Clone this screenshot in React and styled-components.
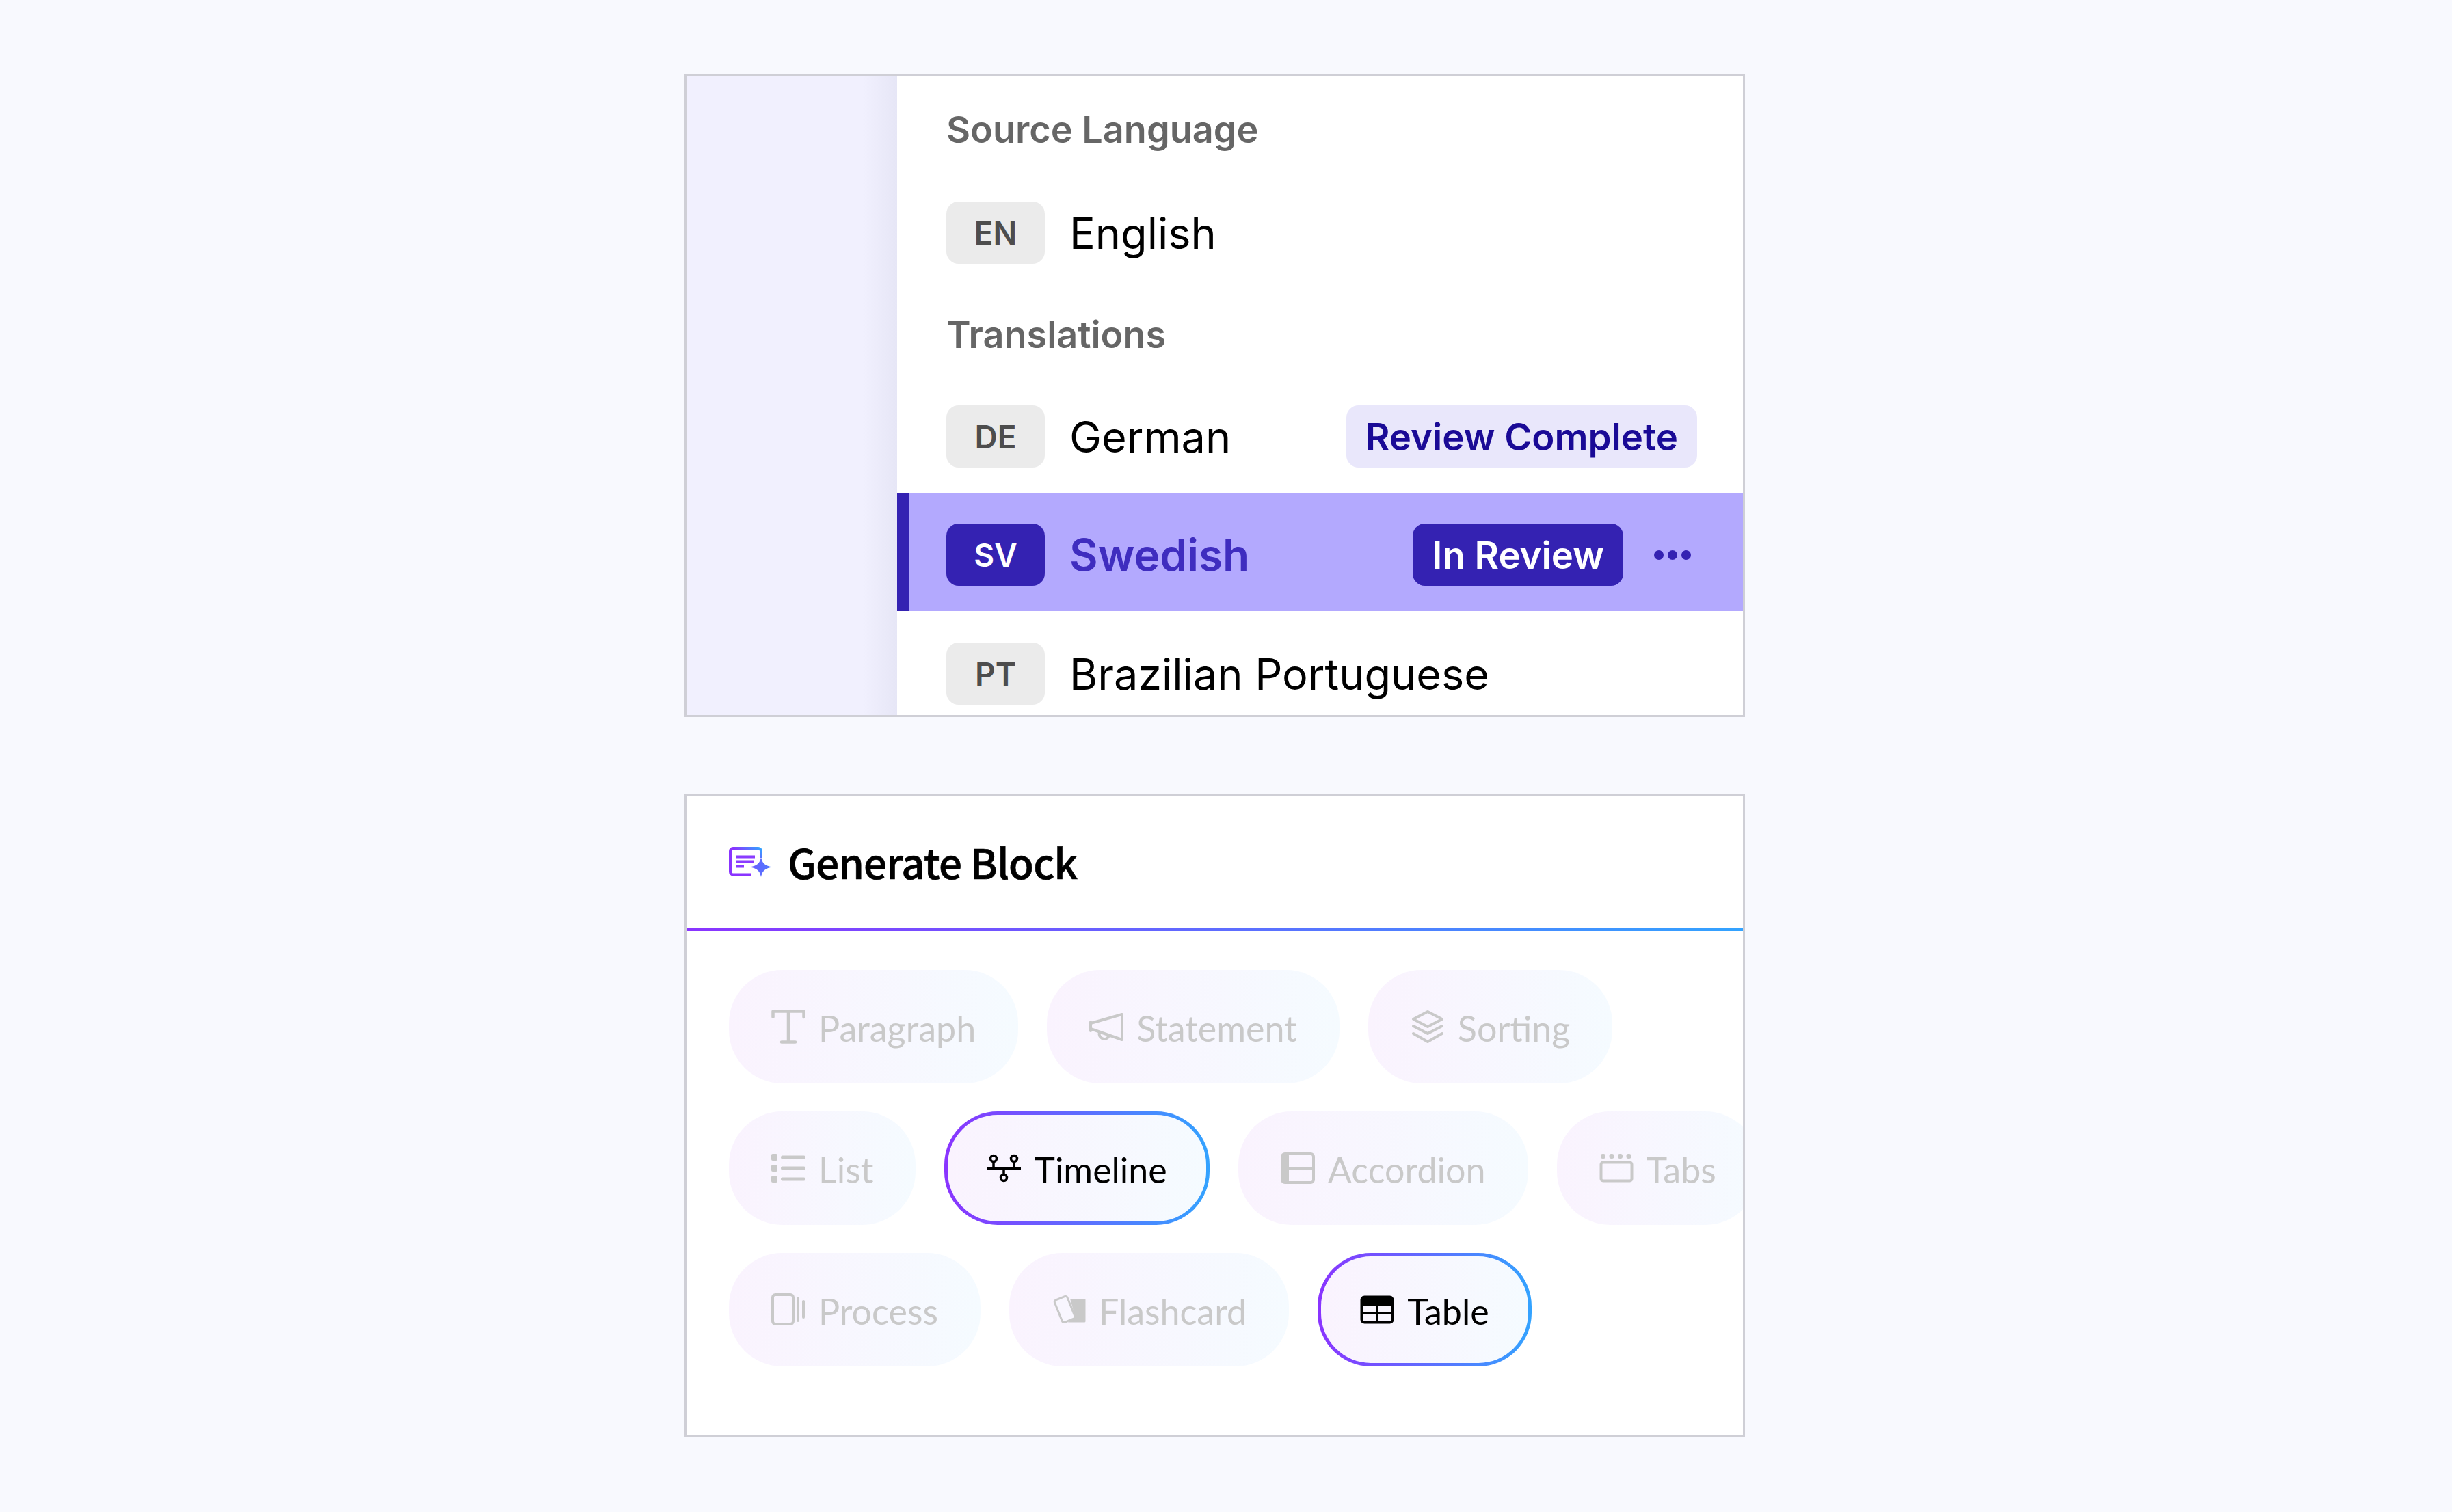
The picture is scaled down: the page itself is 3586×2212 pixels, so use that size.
import styled, { createGlobalStyle } from 'styled-components';

const GlobalStyle = createGlobalStyle`
    html, body {
        margin: 0;
        padding: 0;
        background-color: #f8f9fe;
    }
`;

const Page = styled.div`
    width: 3586px;
    height: 2212px;
    box-sizing: border-box;
    padding: 108px 0 0 1001px;
    display: flex;
    flex-direction: column;
    gap: 112px;
    background-color: #f8f9fe;
`;

const Panel = styled.section`
    width: 1551px;
    height: 941px;
    box-sizing: border-box;
    border: 3px solid #cfcfd6;
    background-color: #fff;
    overflow: hidden;
    display: flex;
    flex-direction: ${({ $column }) => ($column ? 'column' : 'row')};
`;

const Sidebar = styled.div`
    width: 308px;
    flex-shrink: 0;
    background: linear-gradient(90deg, #f1f0fe 0, #f1f0fe 258px, #e6e6f6 100%);
`;

const LanguageList = styled.div`
    flex: 1;
    min-width: 0;
    padding-top: 44px;
    font-family: Inter, "Liberation Sans", sans-serif;
`;

const SectionLabel = styled.div`
    height: 70px;
    line-height: 70px;
    margin: ${({ $top }) => $top || 0}px 0 0 72px;
    font-size: 54px;
    font-weight: 600;
    color: #666;
`;

const Row = styled.div`
    display: flex;
    align-items: center;
    box-sizing: content-box;
    height: 91px;
    margin-top: ${({ $top }) => $top || 0}px;
    padding: ${({ $active }) => ($active ? '45px 76px 37px 54px' : '0 67px 0 72px')};
    background-color: ${({ $active }) => ($active ? '#b3a9fe' : 'transparent')};
    border-left: ${({ $active }) => ($active ? '18px solid #3422b2' : 'none')};
`;

const CodeBadge = styled.span`
    width: 144px;
    height: 91px;
    flex-shrink: 0;
    display: flex;
    align-items: center;
    justify-content: center;
    border-radius: 18px;
    font-size: 46px;
    font-weight: 600;
    background-color: ${({ $active }) => ($active ? '#3422b2' : '#ebebeb')};
    color: ${({ $active }) => ($active ? '#fff' : '#4d4d4d')};
`;

const LanguageName = styled.span`
    margin-left: 36px;
    font-size: ${({ $active }) => ($active ? 64 : 63)}px;
    font-weight: ${({ $active }) => ($active ? 600 : 400)};
    color: ${({ $active }) => ($active ? '#3f2dbf' : '#000')};
`;

const StatusPill = styled.span`
    margin-left: auto;
    height: 91px;
    display: flex;
    align-items: center;
    padding: 0 28px;
    border-radius: 18px;
    font-size: 54.5px;
    font-weight: 600;
    background-color: ${({ $active }) => ($active ? '#3422b2' : '#e9e7fb')};
    color: ${({ $active }) => ($active ? '#fff' : '#1a0a96')};
`;

const MoreDots = styled.span`
    display: flex;
    gap: 6px;
    margin-left: 45px;
`;

const Dot = styled.i`
    width: 14px;
    height: 14px;
    border-radius: 50%;
    background-color: #3422b2;
`;

const BlockHeader = styled.header`
    height: 193px;
    flex-shrink: 0;
    display: flex;
    align-items: center;
    gap: 23px;
    padding-left: 62px;
`;

const BlockTitle = styled.h1`
    margin: 0 0 2px;
    font-family: "Noto Sans CJK SC", "Noto Sans", sans-serif;
    font-size: 60px;
    font-weight: 500;
    letter-spacing: -0.8px;
    -webkit-text-stroke: 0.7px #000;
    color: #000;
`;

const GradientRule = styled.div`
    height: 5px;
    flex-shrink: 0;
    background: linear-gradient(90deg, #8a34ff, #33a3ff);
`;

const ChipArea = styled.div`
    display: flex;
    flex-direction: column;
    gap: 41px;
    padding: 57px 0 0 62px;
`;

const ChipRow = styled.div`
    display: flex;
    gap: 42px;
`;

const Chip = styled.div`
    height: 166px;
    flex-shrink: 0;
    box-sizing: border-box;
    display: flex;
    align-items: center;
    gap: 19px;
    padding: 0 57px;
    border: 5px solid transparent;
    border-radius: 78px;
    font-family: Lato, "Liberation Sans", sans-serif;
    font-size: 52px;
    color: ${({ $selected }) => ($selected ? '#000' : '#c9c9c9')};
    background: ${({ $selected }) =>
        $selected
            ? 'linear-gradient(90deg, #faf3fe, #f5fbff) padding-box, linear-gradient(90deg, #8a34ff, #33a3ff) border-box'
            : 'linear-gradient(90deg, #faf3fe, #f5fbff) border-box'};
`;

const ChipLabel = styled.span`
    padding-top: 3px;
`;

const IconBox = styled.svg`
    width: 50px;
    height: 50px;
    flex-shrink: 0;
`;

const GenerateIcon = () => (
    <svg width="63" height="44" viewBox="0 0 63 44" fill="none">
        <defs>
            <linearGradient id="genGrad" x1="0" y1="1" x2="1" y2="0">
                <stop offset="0.55" stopColor="#8a34ff" />
                <stop offset="1" stopColor="#33a3ff" />
            </linearGradient>
            <linearGradient id="starGrad" x1="0" y1="0" x2="1" y2="0">
                <stop offset="0" stopColor="#6a5cff" />
                <stop offset="1" stopColor="#4f7bff" />
            </linearGradient>
        </defs>
        <path d="M33 40.500H6a4 4 0 0 1-4-4V6a4 4 0 0 1 4-4h37a4 4 0 0 1 4 4v10" stroke="url(#genGrad)" strokeWidth="4" strokeLinejoin="round" />
        <path d="M10 12.500h28v4H10zM10 19.500h26v4H10zM10 26.500h12v4H10z" fill="#8a3cff" />
        <path d="M47 15c2 9 5 12 16 14.500-11 2.500-14 5.500-16 14.500-2-9-5-12-16-14.500 11-2.500 14-5.500 16-14.500z" fill="url(#starGrad)" />
    </svg>
);

const ParagraphIcon = () => (
    <IconBox viewBox="0 0 50 50" fill="none" stroke="currentColor" strokeWidth="4.500" strokeLinecap="round" strokeLinejoin="round">
        <path d="M2.500 11V2.500h45V11M25 2.500v45M15 47.500h20" />
    </IconBox>
);

const StatementIcon = () => (
    <IconBox viewBox="0 0 50 50" fill="none" stroke="currentColor" strokeWidth="4" strokeLinejoin="round">
        <path d="M48 7v37L2 28v-8z" />
        <path d="M2 18v13" strokeLinecap="round" />
        <path d="M15 33a7 7 0 0 0 14 5" />
    </IconBox>
);

const SortingIcon = () => (
    <IconBox viewBox="0 0 50 50" fill="none" stroke="currentColor" strokeWidth="4" strokeLinecap="round" strokeLinejoin="round">
        <path d="M25 3l21 11-21 11L4 14z" />
        <path d="M4 24l21 11 21-11" />
        <path d="M4 35l21 12 21-12" />
    </IconBox>
);

const ListIcon = () => (
    <IconBox viewBox="0 0 50 50" fill="currentColor">
        <rect x="0" y="4" width="9" height="10" rx="2" />
        <rect x="0" y="20" width="9" height="10" rx="2" />
        <rect x="0" y="36" width="9" height="10" rx="2" />
        <rect x="14" y="6.500" width="36" height="5" rx="2.500" />
        <rect x="14" y="22.500" width="36" height="5" rx="2.500" />
        <rect x="14" y="38.500" width="36" height="5" rx="2.500" />
    </IconBox>
);

const TimelineIcon = () => (
    <IconBox viewBox="0 0 50 50" fill="none" stroke="currentColor" strokeWidth="3.500" strokeLinecap="round">
        <path d="M1 25.500h48" />
        <circle cx="10" cy="11" r="4.500" />
        <circle cx="40" cy="11" r="4.500" />
        <circle cx="25" cy="39" r="4.500" />
        <path d="M10 15.500v10M40 15.500v10M25 25.500v9" />
    </IconBox>
);

const AccordionIcon = () => (
    <IconBox viewBox="0 0 50 50" fill="none" stroke="currentColor" strokeWidth="4">
        <rect x="2" y="4" width="46" height="42" rx="4" />
        <path d="M2 25h46" />
        <rect x="2" y="4" width="10" height="42" fill="currentColor" stroke="none" rx="3" />
    </IconBox>
);

const TabsIcon = () => (
    <IconBox viewBox="0 0 50 50" fill="currentColor">
        <rect x="2" y="4" width="7" height="7" rx="3" />
        <rect x="14.500" y="4" width="7" height="7" rx="3" />
        <rect x="27" y="4" width="7" height="7" rx="3" />
        <rect x="39.500" y="4" width="7" height="7" rx="3" />
        <rect x="2.500" y="16.500" width="45" height="27" rx="3" fill="none" stroke="currentColor" strokeWidth="4" />
    </IconBox>
);

const ProcessIcon = () => (
    <IconBox viewBox="0 0 50 50" fill="none" stroke="currentColor" strokeWidth="4" strokeLinecap="round">
        <rect x="2" y="3" width="30" height="43" rx="4" />
        <path d="M39 8v33M47 13v23" />
    </IconBox>
);

const FlashcardIcon = () => (
    <IconBox viewBox="0 0 50 50" fill="none">
        <path d="M27 9h21a1.500 1.500 0 0 1 1.500 1.500V42a1.500 1.500 0 0 1-1.500 1.500H24L34 34z" fill="currentColor" />
        <rect x="9" y="7" width="20" height="35" rx="3" transform="rotate(-22 19 24)" fill="#f8f6fe" stroke="currentColor" strokeWidth="3" />
    </IconBox>
);

const TableIcon = () => (
    <IconBox viewBox="0 0 50 50" fill="none">
        <rect x="2.500" y="6.500" width="45" height="37" rx="4" stroke="currentColor" strokeWidth="4" />
        <path d="M2 9a4 4 0 0 1 4-4h38a4 4 0 0 1 4 4v10H2z" fill="currentColor" />
        <path d="M2 30h46M25 18v25" stroke="currentColor" strokeWidth="4" />
    </IconBox>
);

const chipRows = [
    [
        { label: 'Paragraph', Icon: ParagraphIcon },
        { label: 'Statement', Icon: StatementIcon },
        { label: 'Sorting', Icon: SortingIcon },
    ],
    [
        { label: 'List', Icon: ListIcon },
        { label: 'Timeline', Icon: TimelineIcon, selected: true },
        { label: 'Accordion', Icon: AccordionIcon },
        { label: 'Tabs', Icon: TabsIcon },
    ],
    [
        { label: 'Process', Icon: ProcessIcon },
        { label: 'Flashcard', Icon: FlashcardIcon },
        { label: 'Table', Icon: TableIcon, selected: true },
    ],
];

export default function App() {
    return (
        <Page>
            <GlobalStyle />
            <Panel>
                <Sidebar />
                <LanguageList>
                    <SectionLabel>Source Language</SectionLabel>
                    <Row $top={70}>
                        <CodeBadge>EN</CodeBadge>
                        <LanguageName>English</LanguageName>
                    </Row>
                    <SectionLabel $top={69}>Translations</SectionLabel>
                    <Row $top={68}>
                        <CodeBadge>DE</CodeBadge>
                        <LanguageName>German</LanguageName>
                        <StatusPill>Review Complete</StatusPill>
                    </Row>
                    <Row $active $top={37}>
                        <CodeBadge $active>SV</CodeBadge>
                        <LanguageName $active>Swedish</LanguageName>
                        <StatusPill $active>In Review</StatusPill>
                        <MoreDots>
                            <Dot />
                            <Dot />
                            <Dot />
                        </MoreDots>
                    </Row>
                    <Row $top={46}>
                        <CodeBadge>PT</CodeBadge>
                        <LanguageName>Brazilian Portuguese</LanguageName>
                    </Row>
                </LanguageList>
            </Panel>
            <Panel $column>
                <BlockHeader>
                    <GenerateIcon />
                    <BlockTitle>Generate Block</BlockTitle>
                </BlockHeader>
                <GradientRule />
                <ChipArea>
                    {chipRows.map((row, i) => (
                        <ChipRow key={i}>
                            {row.map(({ label, Icon, selected }) => (
                                <Chip key={label} $selected={selected}>
                                    <Icon />
                                    <ChipLabel>{label}</ChipLabel>
                                </Chip>
                            ))}
                        </ChipRow>
                    ))}
                </ChipArea>
            </Panel>
        </Page>
    );
}
